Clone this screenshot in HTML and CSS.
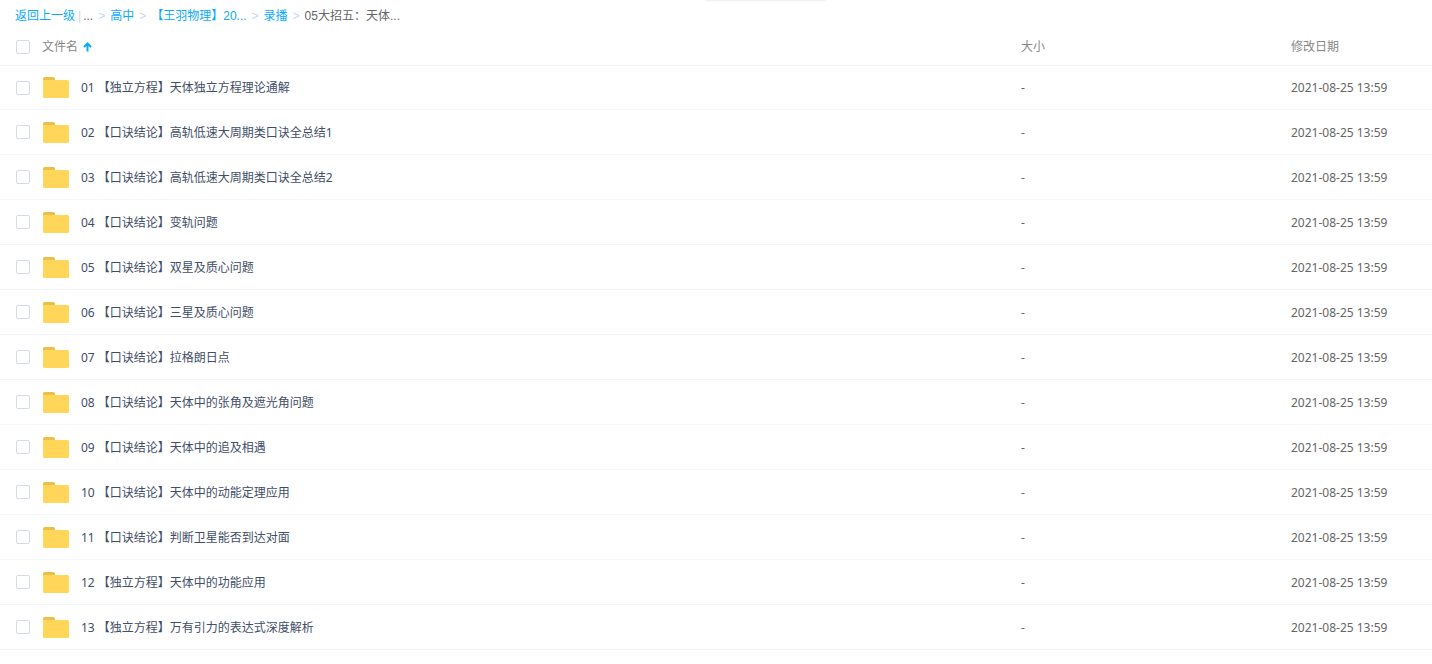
FILE: index.html
```html
<!DOCTYPE html>
<html lang="zh-CN">
<head>
<meta charset="utf-8">
<title>05大招五：天体</title>
<link rel="stylesheet" href="styles.css">
</head>
<body>
<div class="toast-edge"></div>
<svg class="sprite" aria-hidden="true">
  <symbol id="folder" viewBox="0 0 26 21">
    <path d="M0 6V1.5Q0 0 1.5 0H10.5Q12 0 12 1.5V6Z" fill="#ecc048"/>
    <path d="M0 3H24.5Q26 3 26 4.500V19.500Q26 21 24.500 21H1.500Q0 21 0 19.500Z" fill="#ffd659"/>
  </symbol>
</svg>
<nav class="crumbs" aria-label="路径">
  <a href="#">返回上一级</a><span class="bar">|</span><span>...</span><span class="sep">&gt;</span><a href="#">高中</a><span class="sep">&gt;</span><a href="#">【王羽物理】20...</a><span class="sep">&gt;</span><a href="#">录播</a><span class="sep">&gt;</span><span>05大招五：天体...</span>
</nav>
<table class="files">
  <colgroup><col><col class="col-size"><col class="col-date"></colgroup>
  <thead>
    <tr>
      <th><div class="cell"><input class="check" type="checkbox" aria-label="全选"><span>文件名</span><svg class="sort" viewBox="0 0 9 10" aria-hidden="true"><path d="M4.500 9.500V2M1 5L4.500 1.500L8 5" fill="none" stroke="#09aaff" stroke-width="2"/></svg></div></th>
      <th>大小</th>
      <th>修改日期</th>
    </tr>
  </thead>
  <tbody id="rows"></tbody>
</table>
<script src="files.js"></script>
</body>
</html>
```
FILE: styles.css
```css
* {
  box-sizing: border-box;
}

body {
  margin: 0;
  background: #fff;
  color: #666;
  font: 12px/20px "Noto Sans", "Noto Sans CJK SC", sans-serif;
}

.sprite {
  position: absolute;
  width: 0;
  height: 0;
}

.toast-edge {
  position: absolute;
  top: -10px;
  left: calc(50% + 50px);
  width: 122px;
  height: 10px;
  margin-left: -61px;
  border-radius: 3px;
  box-shadow: 0 0 3px rgba(0, 0, 0, 0.16);
}

.crumbs {
  display: flex;
  padding: 6px 15px 3px;
  font-family: "Liberation Sans", "Noto Sans CJK SC", sans-serif;
  white-space: nowrap;
}

.crumbs a {
  color: #09aaff;
  text-decoration: none;
}

.crumbs .sep {
  margin: 0 5px;
  color: #c4d8f4;
}

.crumbs .bar {
  margin: 0 2px 0 3px;
  color: #b8dcf4;
}

.files {
  width: 100%;
  table-layout: fixed;
  border-collapse: separate;
  border-spacing: 0;
}

.col-size {
  width: 270px;
}

.col-date {
  width: 141px;
}

.files th,
.files td {
  padding: 0;
  font-weight: 400;
  text-align: left;
  white-space: nowrap;
}

.files th {
  height: 36px;
  color: #888;
}

.files td {
  height: 45px;
  border-bottom: 1px solid #f2f6fd;
}

.files td + td {
  padding-top: 2px;
}

.files tbody tr:first-child td {
  border-top: 1px solid #f2f6fd;
}

.files tbody tr:first-child td + td {
  padding-top: 1px;
}

.cell {
  display: flex;
  align-items: center;
  padding-left: 16px;
}

.check {
  appearance: none;
  flex: none;
  width: 14px;
  height: 14px;
  margin: 0 12px 0 0;
  border: 1px solid #d5dbe6;
  border-radius: 2px;
  background: #fff;
}

.check:checked {
  border-color: #09aaff;
  background: #09aaff;
}

.sort {
  width: 9px;
  height: 10px;
  margin-left: 5px;
}

.folder {
  flex: none;
  width: 26px;
  height: 21px;
  margin: 0 12px 0 1px;
}

.name {
  overflow: hidden;
  padding-top: 1px;
  color: #424e67;
  text-overflow: ellipsis;
}
```
FILE: files.js
```js
const names = [
  "01 【独立方程】天体独立方程理论通解",
  "02 【口诀结论】高轨低速大周期类口诀全总结1",
  "03 【口诀结论】高轨低速大周期类口诀全总结2",
  "04 【口诀结论】变轨问题",
  "05 【口诀结论】双星及质心问题",
  "06 【口诀结论】三星及质心问题",
  "07 【口诀结论】拉格朗日点",
  "08 【口诀结论】天体中的张角及遮光角问题",
  "09 【口诀结论】天体中的追及相遇",
  "10 【口诀结论】天体中的动能定理应用",
  "11 【口诀结论】判断卫星能否到达对面",
  "12 【独立方程】天体中的功能应用",
  "13 【独立方程】万有引力的表达式深度解析"
];

document.getElementById("rows").innerHTML = names.map((name, i) => `
  <tr>
    <td><div class="cell">
      <input class="check" type="checkbox" id="file-${i}">
      <svg class="folder" aria-hidden="true"><use href="#folder"/></svg>
      <label class="name" for="file-${i}">${name}</label>
    </div></td>
    <td>-</td>
    <td>2021-08-25 13:59</td>
  </tr>`).join("");
```
